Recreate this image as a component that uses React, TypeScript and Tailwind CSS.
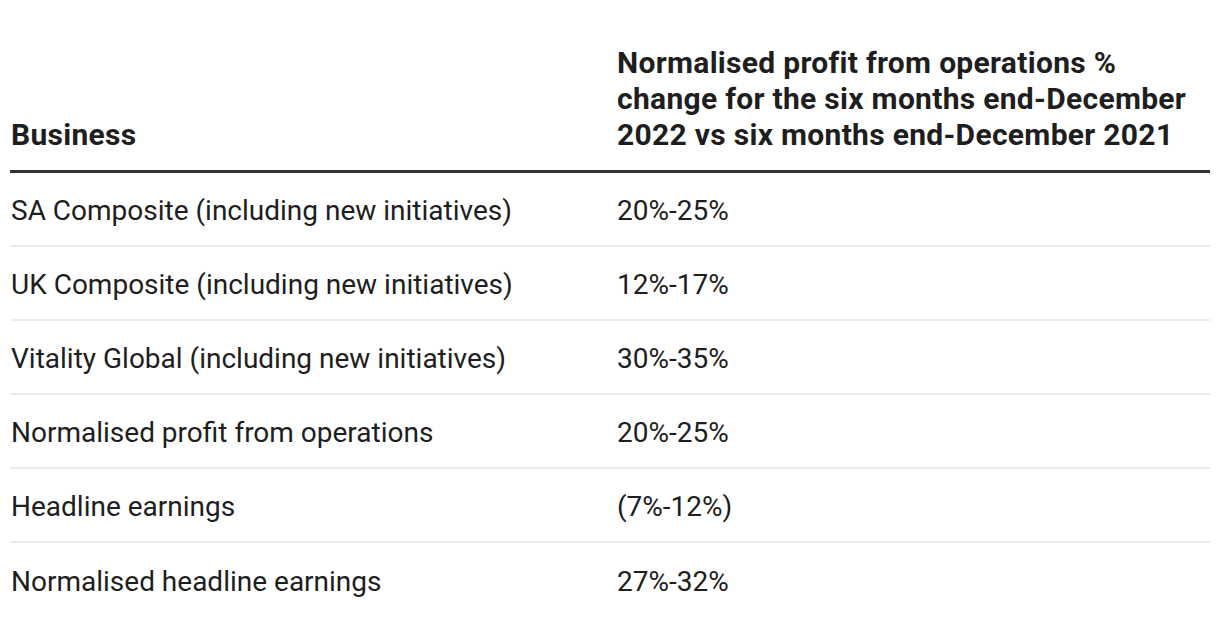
const rows: [string, string][] = [
  ['SA Composite (including new initiatives)', '20%-25%'],
  ['UK Composite (including new initiatives)', '12%-17%'],
  ['Vitality Global (including new initiatives)', '30%-35%'],
  ['Normalised profit from operations', '20%-25%'],
  ['Headline earnings', '(7%-12%)'],
  ['Normalised headline earnings', '27%-32%'],
];

export default function App() {
  return (
    <div className="min-h-screen bg-white px-[10px] pt-[45px] font-['Roboto',sans-serif] text-[#1e1e1e]">
      <div className="w-[1200px]">
        <div className="grid grid-cols-[607px_1fr] border-b-[3px] border-[#333333] pb-[17px] text-[30px] font-bold leading-[36px] tracking-[0.01em]">
          <div className="flex items-end pl-[1px]">Business</div>
          <div>
            Normalised profit from operations % change for the six months end-December 2022 vs six months end-December 2021
          </div>
        </div>
        {rows.map(([name, value], i) => (
          <div
            key={name}
            className={`grid h-[74px] grid-cols-[607px_1fr] items-center pt-[3px] text-[28px] ${
              i < rows.length - 1 ? 'border-b-2 border-[#ebebeb]' : ''
            }`}
          >
            <div className="pl-[1px]">{name}</div>
            <div>{value}</div>
          </div>
        ))}
      </div>
    </div>
  );
}
